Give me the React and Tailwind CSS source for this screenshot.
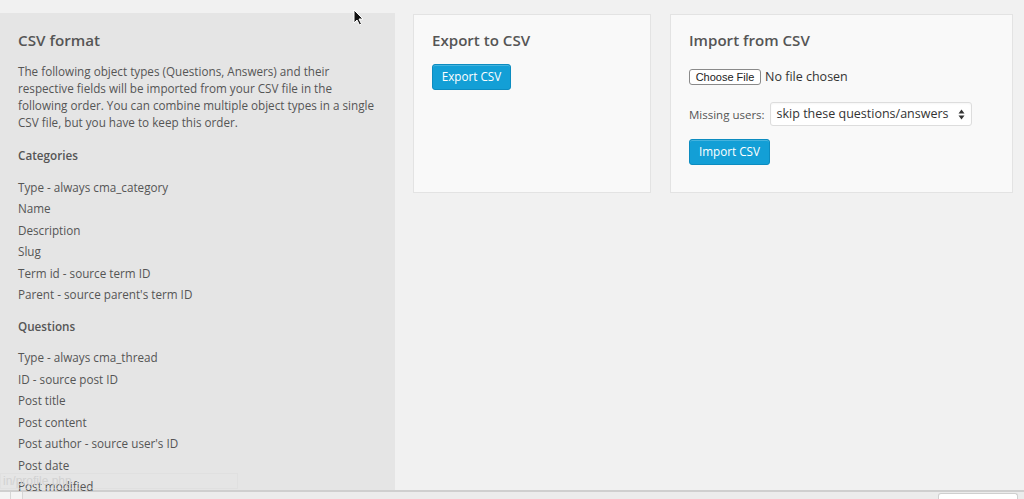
import React from "react";

function Cursor() {
  return (
    <svg className="absolute left-[353px] top-[9px]" width="11" height="17" viewBox="0 0 11 17">
      <path d="M1 1 L1 14 L4 11 L6.5 16 L8.5 15 L6 10 L10 10 Z" fill="#111" stroke="#fff" strokeWidth="1" strokeLinejoin="round" />
    </svg>
  );
}

const catItems = [
  "Type - always cma_category",
  "Name",
  "Description",
  "Slug",
  "Term id - source term ID",
  "Parent - source parent's term ID",
];
const qItems = [
  "Type - always cma_thread",
  "ID - source post ID",
  "Post title",
  "Post content",
  "Post author - source user's ID",
  "Post date",
  "Post modified",
];

function BlueButton({ children, w }) {
  return (
    <button className={`${w} h-[26px] rounded-[3px] bg-[#139fd6] border border-[#0c8cc0] text-white text-[11.7px] leading-none shadow-[inset_0_1px_0_rgba(120,200,230,0.5)]`}>
      {children}
    </button>
  );
}

export default function App() {
  return (
    <div className="relative w-[1024px] h-[499px] overflow-hidden bg-[#f1f1f1] font-['Open_Sans',sans-serif] text-[#555]">
      <div className="flex h-[490px] pt-[13px]">
        <aside className="w-[395px] shrink-0 bg-[#e5e5e5] pl-[18px] pr-[17px] pt-[17px]">
          <h2 className="text-[15.2px] leading-[21px] font-semibold text-[#555]">CSV format</h2>
          <p className="mt-[12px] text-[11.7px] leading-[17px] text-[#555]">
            The following object types (Questions, Answers) and their respective fields will be imported from your CSV file in the following order. You can combine multiple object types in a single CSV file, but you have to keep this order.
          </p>
          <h3 className="mt-[16px] text-[11.7px] leading-[17px] font-semibold text-[#555]">Categories</h3>
          <ul className="mt-[13px] text-[11.7px] leading-[21.4px]">
            {catItems.map((t) => (
              <li key={t}>{t}</li>
            ))}
          </ul>
          <h3 className="mt-[13px] text-[11.7px] leading-[17px] font-semibold text-[#555]">Questions</h3>
          <ul className="mt-[12px] text-[11.7px] leading-[21.5px]">
            {qItems.map((t) => (
              <li key={t}>{t}</li>
            ))}
          </ul>
        </aside>
        <div className="flex items-start gap-[19px] pl-[18px] pt-[1px]">
          <section className="w-[238px] h-[179px] bg-[#f9f9f9] border border-[#e3e3e3] px-[18px] pt-[15px]">
            <h2 className="text-[15.1px] leading-[21px] font-semibold text-[#555]">Export to CSV</h2>
            <div className="mt-[12px]">
              <BlueButton w="w-[79px]">Export CSV</BlueButton>
            </div>
          </section>
          <section className="w-[343px] h-[179px] bg-[#f9f9f9] border border-[#e3e3e3] px-[18px] pt-[15px]">
            <h2 className="text-[15.1px] leading-[21px] font-semibold text-[#555]">Import from CSV</h2>
            <div className="mt-[16px] flex items-center h-[20px]">
              <span className="inline-flex items-center justify-center w-[72px] h-[16px] rounded-[3px] border border-[#8a8a8a] bg-white text-[11px] leading-none text-[#222] font-['Liberation_Sans',sans-serif]">
                Choose File
              </span>
              <span className="ml-[4px] text-[12.5px] text-[#333]">No file chosen</span>
            </div>
            <div className="mt-[15px] flex items-center">
              <span className="text-[11.5px] text-[#555] pt-[1px]">Missing users:</span>
              <div className="ml-[5px] w-[202px] h-[24px] bg-white border border-[#ddd] rounded-[3px] flex items-center justify-between pl-[6px] pr-[6px] shadow-[inset_0_1px_2px_rgba(0,0,0,0.04)]">
                <span className="text-[12.5px] text-[#333]">skip these questions/answers</span>
                <svg width="7" height="11" viewBox="0 0 7 11">
                  <path d="M3.5 0.5 L6.5 4.5 L0.5 4.5 Z" fill="#333" />
                  <path d="M3.5 10.5 L6.5 6.5 L0.5 6.5 Z" fill="#333" />
                </svg>
              </div>
            </div>
            <div className="mt-[12px]">
              <BlueButton w="w-[81px]">Import CSV</BlueButton>
            </div>
          </section>
        </div>
      </div>
      <div className="absolute left-0 top-[473px] w-[238px] h-[16px] border border-[#dcdcdc]/50 pl-[2px] text-[12px] leading-[14px] text-[#d2d2d2] font-['Liberation_Sans',sans-serif]">
        in/profile.php
      </div>
      <footer className="h-[9px] border-t-2 border-[#cfcfcf] bg-[#ececec] flex items-end justify-between">
        <div className="flex h-[7px]">
          <div className="w-[11px] h-full border-r border-[#d6d6d6] bg-[#f4f4f4]" />
          <div className="w-[12px] h-full border-r border-[#d6d6d6] bg-[#f4f4f4]" />
        </div>
        <div className="mr-[6px] w-[80px] h-[6px] rounded-t-[3px] border border-b-0 border-[#cfcfcf] bg-white" />
      </footer>
      <Cursor />
    </div>
  );
}
